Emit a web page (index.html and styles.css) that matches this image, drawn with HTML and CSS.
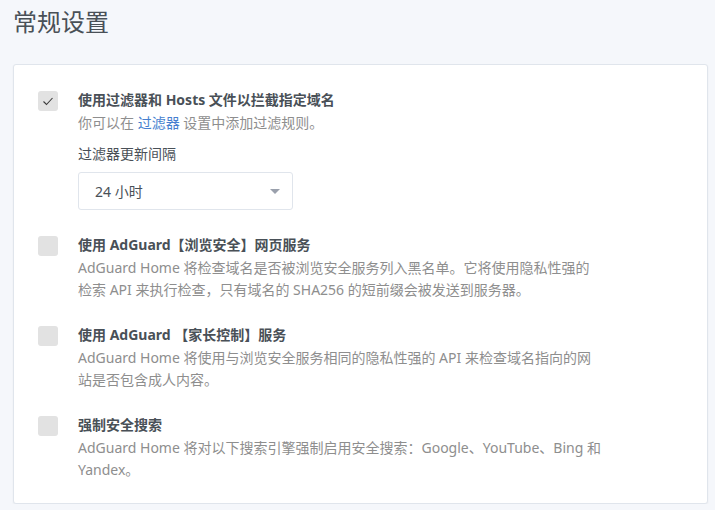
FILE: index.html
```html
<!DOCTYPE html>
<html lang="zh-CN">
<head>
    <meta charset="UTF-8">
    <meta name="viewport" content="width=device-width, initial-scale=1.0">
    <title>常规设置</title>
    <link rel="stylesheet" href="styles.css">
</head>
<body>
    <div class="page">
        <h1 class="page-title">常规设置</h1>

        <div class="card">
            <div class="setting">
                <span class="checkbox checked">
                    <svg viewBox="0 0 20 20"><path d="M5.5 10.5l3 3 6-6.5"/></svg>
                </span>
                <div class="setting-body">
                    <div class="setting-title">使用过滤器和 Hosts 文件以拦截指定域名</div>
                    <div class="setting-desc">你可以在 <a href="#">过滤器</a> 设置中添加过滤规则。</div>
                    <div class="field">
                        <label class="field-label">过滤器更新间隔</label>
                        <div class="select">
                            <span>24 小时</span>
                            <span class="caret"></span>
                        </div>
                    </div>
                </div>
            </div>

            <div class="setting">
                <span class="checkbox"></span>
                <div class="setting-body">
                    <div class="setting-title">使用 AdGuard【浏览安全】网页服务</div>
                    <div class="setting-desc">AdGuard Home 将检查域名是否被浏览安全服务列入黑名单。它将使用隐私性强的检索 API 来执行检查，只有域名的 SHA256 的短前缀会被发送到服务器。</div>
                </div>
            </div>

            <div class="setting">
                <span class="checkbox"></span>
                <div class="setting-body">
                    <div class="setting-title">使用 AdGuard 【家长控制】服务</div>
                    <div class="setting-desc">AdGuard Home 将使用与浏览安全服务相同的隐私性强的 API 来检查域名指向的网站是否包含成人内容。</div>
                </div>
            </div>

            <div class="setting">
                <span class="checkbox"></span>
                <div class="setting-body">
                    <div class="setting-title">强制安全搜索</div>
                    <div class="setting-desc">AdGuard Home 将对以下搜索引擎强制启用安全搜索：Google、YouTube、Bing 和 Yandex。</div>
                </div>
            </div>
        </div>
    </div>
</body>
</html>
```

FILE: styles.css
```css
* {
    margin: 0;
    padding: 0;
    box-sizing: border-box;
}

body {
    background: #f5f7fb;
    font-family: "Noto Sans", "Noto Sans CJK SC", sans-serif;
    color: #495057;
}

.page {
    padding: 6px 7px 0 13px;
}

.page-title {
    font-size: 24px;
    font-weight: 400;
    line-height: 32px;
    color: #495057;
    margin-bottom: 26px;
}

.card {
    background: #fff;
    border: 1px solid #e0e5ec;
    border-radius: 3px;
    box-shadow: 0 1px 2px rgba(0, 0, 0, 0.05);
    padding: 23px 24px 22px;
}

.setting {
    display: flex;
    gap: 20px;
    margin-bottom: 22px;
}

.setting:last-child {
    margin-bottom: 0;
}

.checkbox {
    flex: none;
    width: 20px;
    height: 20px;
    margin-top: 3px;
    background: #e2e2e2;
    border-radius: 3px;
    display: flex;
    align-items: center;
    justify-content: center;
}

.checkbox svg {
    width: 20px;
    height: 20px;
    fill: none;
    stroke: #3a3a3a;
    stroke-width: 1.1;
}

.setting-body {
    max-width: 524px;
}

.setting-title {
    font-size: 14px;
    font-weight: 700;
    line-height: 24px;
    color: #495057;
}

.setting-desc {
    font-size: 14px;
    line-height: 22px;
    color: #8e8e8e;
}

.setting-desc a {
    color: #467fcf;
    text-decoration: none;
}

.field {
    margin-top: 9px;
    margin-bottom: 1px;
}

.field-label {
    display: block;
    font-size: 14px;
    line-height: 22px;
    color: #495057;
    margin-bottom: 7px;
}

.select {
    width: 215px;
    height: 38px;
    border: 1px solid #e0e5ec;
    border-radius: 3px;
    display: flex;
    align-items: center;
    justify-content: space-between;
    padding: 0 12px 0 16px;
    font-size: 14px;
    color: #495057;
}

.caret {
    width: 0;
    height: 0;
    border-left: 5px solid transparent;
    border-right: 5px solid transparent;
    border-top: 5px solid #9aa0ac;
}
```
